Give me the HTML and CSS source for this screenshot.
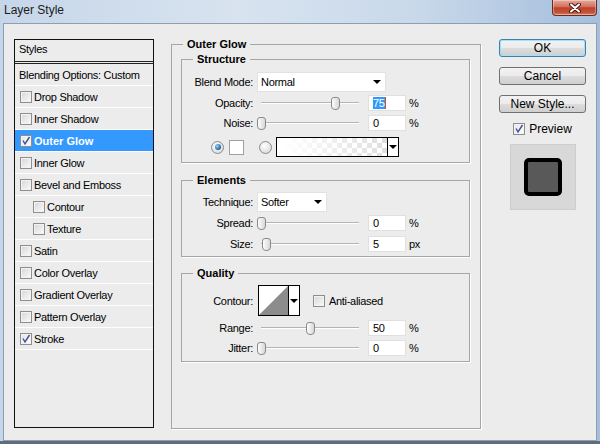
FILE: index.html
```html
<!DOCTYPE html>
<html lang="en">
<head>
    <meta charset="UTF-8">
    <title>Layer Style</title>
    <link rel="stylesheet" href="styles.css">
</head>
<body>
    <div class="window">
        <div class="titlebar">
            <span class="title">Layer Style</span>
            <div class="close">
                <svg width="12" height="10" viewBox="0 0 12 10">
                    <path d="M2 1.5 L10 8.5 M10 1.5 L2 8.5" stroke="#4a1812" stroke-width="4" stroke-linecap="round"/>
                    <path d="M2 1.5 L10 8.5 M10 1.5 L2 8.5" stroke="#fff" stroke-width="2" stroke-linecap="round"/>
                </svg>
            </div>
        </div>

        <div class="client">
            <div class="styles-list">
                <div class="list-head">Styles</div>
                <div class="list-item plain">Blending Options: Custom</div>
                <div class="list-item"><span class="cb"></span>Drop Shadow</div>
                <div class="list-item"><span class="cb"></span>Inner Shadow</div>
                <div class="list-item active"><span class="cb checked"><svg width="10" height="10" viewBox="0 0 10 10"><path d="M2 4.5 L4 8 L8.5 1" fill="none" stroke="#3d4f98" stroke-width="1.4"/></svg></span>Outer Glow</div>
                <div class="list-item"><span class="cb"></span>Inner Glow</div>
                <div class="list-item"><span class="cb"></span>Bevel and Emboss</div>
                <div class="list-item sub"><span class="cb"></span>Contour</div>
                <div class="list-item sub"><span class="cb"></span>Texture</div>
                <div class="list-item"><span class="cb"></span>Satin</div>
                <div class="list-item"><span class="cb"></span>Color Overlay</div>
                <div class="list-item"><span class="cb"></span>Gradient Overlay</div>
                <div class="list-item"><span class="cb"></span>Pattern Overlay</div>
                <div class="list-item"><span class="cb checked"><svg width="10" height="10" viewBox="0 0 10 10"><path d="M2 4.5 L4 8 L8.5 1" fill="none" stroke="#3d4f98" stroke-width="1.4"/></svg></span>Stroke</div>
            </div>

            <fieldset class="group outer">
                <legend>Outer Glow</legend>

                <fieldset class="group inner structure">
                    <legend>Structure</legend>
                    <div class="row h20">
                        <span class="lbl">Blend Mode:</span>
                        <div class="select blend"><span>Normal</span><span class="caret"></span></div>
                    </div>
                    <div class="row h16 mt3">
                        <span class="lbl">Opacity:</span>
                        <div class="slider"><span class="thumb" style="left: 75%"></span></div>
                        <div class="num"><span class="sel">75</span></div>
                        <span class="unit">%</span>
                    </div>
                    <div class="row h16 mt4">
                        <span class="lbl">Noise:</span>
                        <div class="slider"><span class="thumb" style="left: 0%"></span></div>
                        <div class="num">0</div>
                        <span class="unit">%</span>
                    </div>
                    <div class="row h20 mt6 color-row">
                        <span class="radio on"></span>
                        <span class="swatch"></span>
                        <span class="radio off"></span>
                        <div class="gradient"><span class="grad-fill"></span><span class="drop-part"><span class="caret"></span></span></div>
                    </div>
                </fieldset>

                <fieldset class="group inner elements">
                    <legend>Elements</legend>
                    <div class="row h20">
                        <span class="lbl">Technique:</span>
                        <div class="select technique"><span>Softer</span><span class="caret"></span></div>
                    </div>
                    <div class="row h16 mt3">
                        <span class="lbl">Spread:</span>
                        <div class="slider"><span class="thumb" style="left: 0%"></span></div>
                        <div class="num">0</div>
                        <span class="unit">%</span>
                    </div>
                    <div class="row h16 mt5">
                        <span class="lbl">Size:</span>
                        <div class="slider"><span class="thumb" style="left: 5%"></span></div>
                        <div class="num">5</div>
                        <span class="unit">px</span>
                    </div>
                </fieldset>

                <fieldset class="group inner quality">
                    <legend>Quality</legend>
                    <div class="row contour-row">
                        <span class="lbl">Contour:</span>
                        <div class="contour">
                            <svg class="curve" width="29" height="29" viewBox="0 0 29 29">
                                <rect width="29" height="29" fill="#fff"/>
                                <polygon points="0,29 29,0 29,29" fill="#8c8c8c"/>
                            </svg>
                            <span class="drop-part"><span class="caret"></span></span>
                        </div>
                        <span class="cb aa"></span>
                        <span class="aa-label">Anti-aliased</span>
                    </div>
                    <div class="row h16 mt4">
                        <span class="lbl">Range:</span>
                        <div class="slider"><span class="thumb" style="left: 50%"></span></div>
                        <div class="num">50</div>
                        <span class="unit">%</span>
                    </div>
                    <div class="row h16 mt4">
                        <span class="lbl">Jitter:</span>
                        <div class="slider"><span class="thumb" style="left: 0%"></span></div>
                        <div class="num">0</div>
                        <span class="unit">%</span>
                    </div>
                </fieldset>
            </fieldset>

            <div class="actions">
                <button class="btn default">OK</button>
                <button class="btn">Cancel</button>
                <button class="btn">New Style...</button>
                <div class="preview-toggle">
                    <span class="cb checked"><svg width="10" height="10" viewBox="0 0 10 10"><path d="M2 4.5 L4 8 L8.5 1" fill="none" stroke="#3d4f98" stroke-width="1.4"/></svg></span>
                    Preview
                </div>
                <div class="preview-box">
                    <div class="preview-shape"></div>
                </div>
            </div>
        </div>
    </div>
</body>
</html>
```

FILE: styles.css
```css
body {
    margin: 0;
    font-family: 'Liberation Sans', Arial, sans-serif;
    font-size: 11px;
    letter-spacing: -0.3px;
    color: #000;
}

.window {
    width: 600px;
    height: 444px;
    display: flex;
    flex-direction: column;
    overflow: hidden;
    background:
        linear-gradient(to bottom, transparent 441px, #5e6c7e 441px),
        linear-gradient(to right, #c6d6e9 0%, #d8e3ef 40%, #c8d8ea 70%, #a4bedc 100%);
}

/* Title bar */
.titlebar {
    height: 23px;
    flex: none;
    display: flex;
    justify-content: space-between;
    align-items: flex-start;
}

.title {
    font-size: 12px;
    line-height: 13px;
    letter-spacing: 0;
    color: #1b1b1b;
    padding: 4px 0 0 4px;
}

.close {
    width: 45px;
    height: 16px;
    margin-right: 3px;
    box-sizing: border-box;
    border: 1px solid #6b2a22;
    border-top: none;
    border-radius: 0 0 4px 4px;
    background: linear-gradient(#e6a99c, #d2705c 45%, #bd4128 52%, #c4553a 85%, #d88a6e);
    box-shadow: inset 0 0 0 1px rgba(255, 255, 255, 0.35);
    display: flex;
    align-items: center;
    justify-content: center;
}

/* Client area */
.client {
    flex: 1;
    margin: 0 3px 3px;
    border: 1px solid #8d9db2;
    background: #ececec;
    display: flex;
    align-items: flex-start;
    padding: 13px 0 0 10px;
}

/* Styles list */
.styles-list {
    width: 140px;
    height: 389px;
    box-sizing: border-box;
    border: 1px solid #111;
    margin-top: 2px;
    flex: none;
}

.list-head {
    height: 21px;
    line-height: 19px;
    padding-left: 4px;
    border-bottom: 3px double #222;
}

.list-item {
    height: 21px;
    border-bottom: 1px solid #fff;
    display: flex;
    align-items: center;
    padding-left: 5px;
}

.list-item.plain {
    padding-left: 4px;
}

.list-item.sub {
    padding-left: 18px;
}

.list-item.active {
    background: #3399ff;
    color: #fff;
    font-weight: bold;
    letter-spacing: 0;
}

.cb {
    width: 12px;
    height: 12px;
    box-sizing: border-box;
    border: 1px solid #8e8e8e;
    background: linear-gradient(135deg, #d6d6d6, #fbfbfb);
    box-shadow: inset 0 0 0 1px #f3f3f3;
    margin-right: 2px;
    flex: none;
    display: flex;
    align-items: center;
    justify-content: center;
}

.cb.checked {
    background: linear-gradient(135deg, #e4e4e4, #ffffff);
}

/* Group boxes */
.group {
    margin: 0;
    padding: 0;
    min-width: 0;
    border: 1px solid #a6a6a6;
    box-shadow: 1px 1px 0 #fff;
}

.group > legend {
    padding: 0 4px;
    font-weight: bold;
    letter-spacing: 0;
    line-height: 14px;
}

.outer {
    width: 310px;
    height: 392px;
    box-sizing: border-box;
    margin-left: 17px;
    padding: 1px 10px 0 9px;
    flex: none;
}

.outer > legend {
    margin-left: 2px;
}

.inner > legend {
    margin-left: 11px;
}

.structure {
    padding: 6px 0 5px;
}

.elements {
    margin-top: 10px;
    padding: 5px 0 4px;
}

.quality {
    margin-top: 9px;
    padding: 5px 0 5px;
}

/* Rows */
.row {
    display: flex;
    align-items: center;
}

.h20 { height: 20px; }
.h16 { height: 16px; }
.mt3 { margin-top: 3px; }
.mt4 { margin-top: 4px; }
.mt5 { margin-top: 5px; }
.mt6 { margin-top: 6px; }

.lbl {
    width: 71px;
    flex: none;
    text-align: right;
}

.select {
    margin-left: 4px;
    height: 20px;
    box-sizing: border-box;
    background: #fff;
    border: 1px solid #e2e2e2;
    display: flex;
    align-items: center;
    justify-content: space-between;
    padding: 0 4px 0 3px;
}

.blend {
    width: 129px;
}

.technique {
    width: 70px;
}

.caret {
    width: 0;
    height: 0;
    border-left: 4px solid transparent;
    border-right: 4px solid transparent;
    border-top: 4px solid #000;
}

/* Sliders */
.slider {
    position: relative;
    width: 98px;
    height: 16px;
    margin-left: 8px;
    flex: none;
}

.slider::before {
    content: '';
    position: absolute;
    left: 0;
    right: 0;
    top: 7px;
    height: 1px;
    background: #b4b4b4;
    border-bottom: 1px solid #fff;
}

.thumb {
    position: absolute;
    top: 2px;
    width: 9px;
    height: 13px;
    margin-left: -4px;
    box-sizing: border-box;
    border: 1px solid #8a8a8a;
    border-radius: 3px 3px 4px 4px;
    background: linear-gradient(to right, #fdfdfd, #d8d8d8);
}

.num {
    width: 38px;
    height: 16px;
    box-sizing: border-box;
    margin-left: 9px;
    padding-left: 4px;
    line-height: 14px;
    background: #fff;
    border: 1px solid #e0e0e0;
    flex: none;
}

.sel {
    background: #3399ff;
    color: #fff;
    border-right: 1px solid #c05a10;
}

.unit {
    margin-left: 3px;
}

/* Color row */
.color-row {
    padding-left: 29px;
}

.radio {
    width: 13px;
    height: 13px;
    box-sizing: border-box;
    border: 1px solid #8b8b8b;
    border-radius: 50%;
    background: radial-gradient(circle at 40% 35%, #fff, #d2d2d2);
    display: flex;
    align-items: center;
    justify-content: center;
    flex: none;
}

.radio.on::after {
    content: '';
    width: 6px;
    height: 6px;
    border-radius: 50%;
    background: radial-gradient(circle at 35% 35%, #9ad6ff, #1d5e9b 70%);
}

.radio.off {
    margin-left: 15px;
}

.swatch {
    width: 15px;
    height: 15px;
    box-sizing: border-box;
    margin-left: 5px;
    background: #fff;
    border: 1px solid #a0a0a0;
}

.gradient {
    width: 123px;
    height: 20px;
    box-sizing: border-box;
    margin-left: 4px;
    border: 1px solid #000;
    display: flex;
}

.grad-fill {
    flex: 1;
    background:
        linear-gradient(to right, #fff 5%, rgba(255, 255, 255, 0.3)),
        repeating-conic-gradient(#d0d0d0 0 25%, #fff 0 50%) 0 0 / 10px 10px;
}

.drop-part {
    width: 10px;
    background: #fff;
    border-left: 1px solid #000;
    display: flex;
    align-items: center;
    justify-content: center;
}

/* Contour row */
.contour-row {
    height: 31px;
}

.contour {
    width: 42px;
    height: 31px;
    box-sizing: border-box;
    margin-left: 5px;
    border: 1px solid #000;
    display: flex;
}

.curve {
    display: block;
}

.cb.aa {
    margin-left: 13px;
}

.aa-label {
    margin-left: 2px;
}

/* Right column */
.actions {
    width: 87px;
    margin: 2px 0 0 18px;
    display: flex;
    flex-direction: column;
    align-items: center;
    flex: none;
}

.btn {
    width: 87px;
    height: 18px;
    box-sizing: border-box;
    padding: 0;
    margin-bottom: 10px;
    border: 1px solid #707070;
    border-radius: 3px;
    background: linear-gradient(#f2f2f2, #ebebeb 50%, #dddddd 50%, #cfcfcf);
    font-family: 'Liberation Sans', Arial, sans-serif;
    font-size: 12px;
    line-height: 15px;
    letter-spacing: 0;
    color: #000;
}

.btn.default {
    border-color: #3c7fb1;
    box-shadow: inset 0 0 0 1px #a8def7;
}

.preview-toggle {
    margin-top: -1px;
    display: flex;
    align-items: center;
    font-size: 12px;
    line-height: 14px;
    letter-spacing: 0;
}

.preview-toggle .cb {
    margin-right: 4px;
}

.preview-box {
    width: 66px;
    height: 66px;
    box-sizing: border-box;
    margin-top: 8px;
    background: #d8d8d8;
    border: 1px solid #cdcdcd;
    display: flex;
    align-items: center;
    justify-content: center;
}

.preview-shape {
    width: 38px;
    height: 38px;
    box-sizing: border-box;
    border: 4px solid #000;
    border-radius: 5px;
    background: #595959;
}
```
